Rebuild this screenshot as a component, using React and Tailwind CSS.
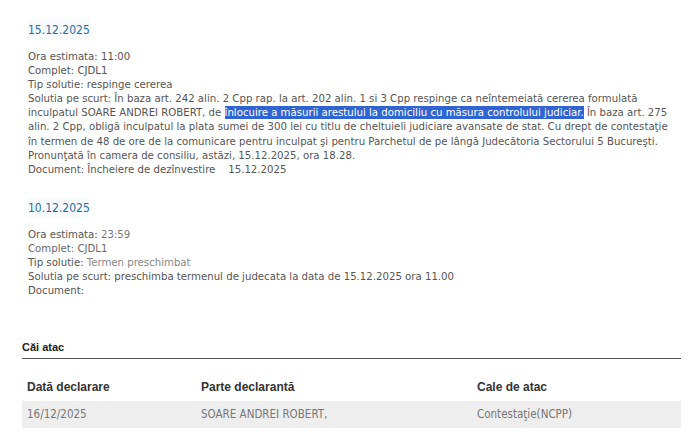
import React from 'react'

const body = "font-['DejaVu_Sans_Condensed','DejaVu_Sans',sans-serif]"

function Line({ children }) {
    return <div className="whitespace-nowrap h-[14.1px]">{children}</div>
}

function Session({ date, children }) {
    return (
        <div className="pl-[28px]">
            <div className="h-[20px] leading-[20px] text-[#1c6ea4] text-[12px] bg-[#f7fbfd] w-fit">{date}</div>
            <div className="mt-[10px] text-[11.3px] leading-[14.1px] text-[#555]">{children}</div>
        </div>
    )
}

export default function App() {
    return (
        <div className={`w-[700px] h-[439px] bg-white overflow-hidden ${body}`}>
            <div className="pt-[20px]">
                <Session date="15.12.2025">
                    <Line>Ora estimata: 11:00</Line>
                    <Line>Complet: CJDL1</Line>
                    <Line>Tip solutie: respinge cererea</Line>
                    <Line>Solutia pe scurt: În baza art. 242 alin. 2 Cpp rap. la art. 202 alin. 1 si 3 Cpp respinge ca neîntemeiată cererea formulată</Line>
                    <Line>
                        inculpatul SOARE ANDREI ROBERT, de{' '}
                        <span className="bg-[#3064d2] text-white">înlocuire a măsurii arestului la domiciliu cu măsura controlului judiciar.</span>{' '}
                        În baza art. 275
                    </Line>
                    <Line>alin. 2 Cpp, obligă inculpatul la plata sumei de 300 lei cu titlu de cheltuieli judiciare avansate de stat. Cu drept de contestaţie</Line>
                    <Line>în termen de 48 de ore de la comunicare pentru inculpat şi pentru Parchetul de pe lângă Judecătoria Sectorului 5 Bucureşti.</Line>
                    <Line>Pronunţată în camera de consiliu, astăzi, 15.12.2025, ora 18.28.</Line>
                    <Line>Document: Încheiere de dezînvestire&nbsp;&nbsp;&nbsp;&nbsp;15.12.2025</Line>
                </Session>
            </div>
            <div className="mt-[21px]">
                <Session date="10.12.2025">
                    <Line>Ora estimata: <span className="text-[#777]">23:59</span></Line>
                    <Line><span className="text-[#6a6a6a]">Complet: CJDL1</span></Line>
                    <Line>Tip solutie: <span className="text-[#888]">Termen preschimbat</span></Line>
                    <Line>Solutia pe scurt: preschimba termenul de judecata la data de 15.12.2025 ora 11.00</Line>
                    <Line>Document:</Line>
                </Session>
            </div>

            <div className="ml-[22px] mr-[19px] mt-[42px] font-['Liberation_Sans',sans-serif]">
                <div className="text-[11px] font-bold text-[#222] pb-[4px] border-b border-[#555] leading-[14px]">Căi atac</div>
                <div className="mt-[20px] grid grid-cols-[174px_276px_1fr] text-[12px] font-bold text-[#333] px-[5px] h-[16px] leading-[16px]">
                    <div>Dată declarare</div>
                    <div>Parte declarantă</div>
                    <div>Cale de atac</div>
                </div>
                <div className={`mt-[6px] grid grid-cols-[174px_276px_1fr] bg-[#eeeeee] text-[11.5px] text-[#777] px-[5px] h-[27px] items-center ${body}`}>
                    <div>16/12/2025</div>
                    <div>SOARE ANDREI ROBERT,</div>
                    <div>Contestaţie(NCPP)</div>
                </div>
            </div>
        </div>
    )
}
